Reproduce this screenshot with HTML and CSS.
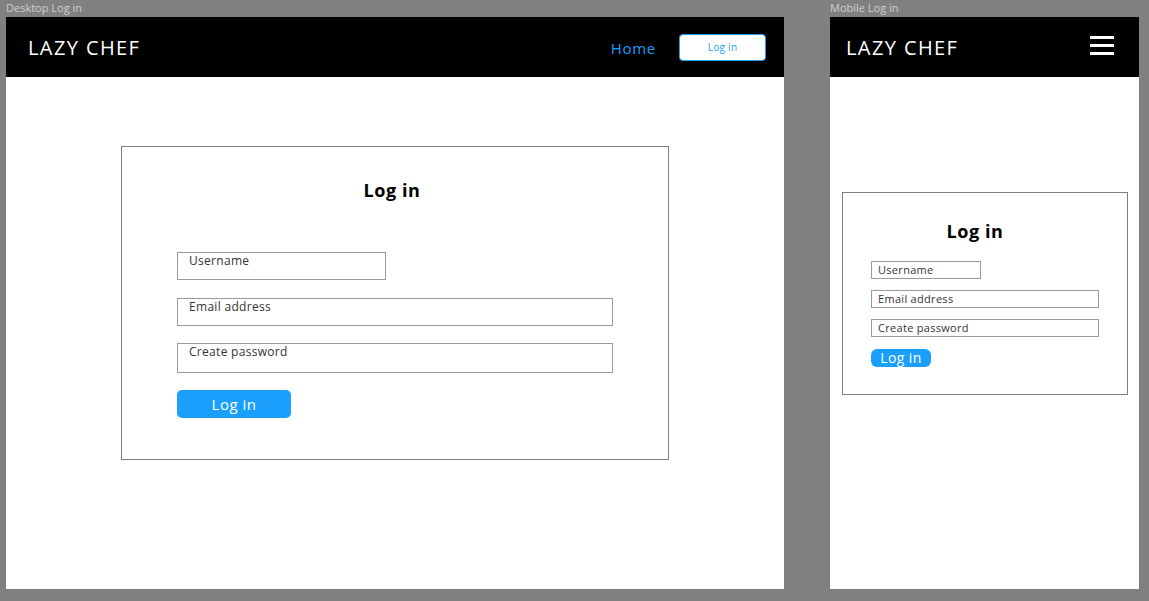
FILE: index.html
```html
<!DOCTYPE html>
<html lang="en">
<head>
<meta charset="utf-8">
<title>Lazy Chef Log in</title>
<link rel="stylesheet" href="styles.css">
</head>
<body>
<div class="canvas">
  <section class="col col-desktop">
    <div class="frame-label">Desktop Log in</div>
    <div class="frame frame-desktop">
      <header class="nav">
        <div class="logo">LAZY CHEF</div>
        <nav class="nav-right">
          <a class="nav-home">Home</a>
          <a class="nav-btn">Log in</a>
        </nav>
      </header>
      <div class="d-body">
        <div class="card d-card">
          <h1 class="d-title">Log in</h1>
          <div class="d-form">
            <div class="field d-field d-user">Username</div>
            <div class="field d-field d-wide d-email">Email address</div>
            <div class="field d-field d-wide d-pass">Create password</div>
            <div class="d-submit">Log in</div>
          </div>
        </div>
      </div>
    </div>
  </section>
  <section class="col col-mobile">
    <div class="frame-label">Mobile Log in</div>
    <div class="frame frame-mobile">
      <header class="nav m-nav">
        <div class="logo">LAZY CHEF</div>
        <div class="burger"><span></span><span></span><span></span></div>
      </header>
      <div class="m-body">
        <div class="card m-card">
          <h1 class="m-title">Log in</h1>
          <div class="m-form">
            <div class="field m-field m-user">Username</div>
            <div class="field m-field m-wide">Email address</div>
            <div class="field m-field m-wide">Create password</div>
            <div class="m-submit">Log in</div>
          </div>
        </div>
      </div>
    </div>
  </section>
</div>
</body>
</html>
```

FILE: styles.css
```css
html, body {
  margin: 0;
  padding: 0;
  background: #808080;
  font-family: "Open Sans", "DejaVu Sans", sans-serif;
}
.canvas {
  display: flex;
  gap: 46px;
  padding-left: 6px;
  height: 601px;
  overflow: hidden;
}
.col { display: flex; flex-direction: column; }
.frame-label {
  height: 17px;
  font-size: 11px;
  line-height: 17px;
  color: #cfcfcf;
  margin-top: -1px;
  margin-bottom: 1px;
}
.frame {
  background: #fff;
  height: 572px;
  display: flex;
  flex-direction: column;
}
.frame-desktop { width: 778px; }
.frame-mobile { width: 309px; }

.nav {
  height: 60px;
  background: #000;
  display: flex;
  align-items: center;
  justify-content: space-between;
  padding: 0 18px 0 22px;
  flex-shrink: 0;
}
.m-nav { padding: 0 25px 0 16px; }
.logo {
  color: #fff;
  font-size: 20px;
  letter-spacing: 1.4px;
  margin-top: 1px;
}
.nav-right { display: flex; align-items: center; gap: 23px; }
.nav-home {
  color: #1a9ffd;
  font-size: 15px;
  letter-spacing: 0.7px;
  margin-top: 1px;
}
.nav-btn {
  width: 85px;
  height: 25px;
  background: #fff;
  border: 1px solid #1a9ffd;
  border-radius: 4px;
  color: #1a9ffd;
  font-size: 10px;
  letter-spacing: 0.3px;
  display: flex;
  align-items: center;
  justify-content: center;
}
.burger { display: flex; flex-direction: column; gap: 5px; margin-top: -4px; }
.burger span { display: block; width: 24px; height: 3px; background: #fff; }

.card {
  background: #fff;
  border: 1px solid #808080;
  box-sizing: border-box;
}
.d-body { padding: 69px 0 0 115px; }
.d-card { width: 548px; height: 314px; }
.d-title {
  margin: 31px 0 0;
  text-align: center;
  font-size: 18px;
  font-weight: 700;
  line-height: 24px;
  letter-spacing: 0.6px;
  padding-right: 6px;
}
.d-form {
  padding: 0 0 0 55px;
  margin-top: 50px;
  display: flex;
  flex-direction: column;
  align-items: flex-start;
}
.field {
  box-sizing: border-box;
  border: 1px solid #9a9a9a;
  color: #333;
  background: #fff;
}
.d-field {
  height: 28px;
  font-size: 12px;
  line-height: 14px;
  letter-spacing: 0.3px;
  padding: 1px 0 0 11px;
  margin-bottom: 18px;
}
.d-user { width: 209px; }
.d-wide { width: 436px; }
.d-email { margin-bottom: 17px; }
.d-pass { height: 30px; margin-bottom: 17px; }
.d-submit {
  width: 114px;
  height: 28px;
  background: #1a9ffd;
  border-radius: 5px;
  color: #fff;
  font-size: 15px;
  letter-spacing: 0.5px;
  display: flex;
  align-items: center;
  justify-content: center;
}

.m-body { padding: 115px 0 0 12px; }
.m-card { width: 286px; height: 203px; }
.m-title {
  margin: 26px 0 0;
  text-align: center;
  font-size: 18px;
  font-weight: 700;
  line-height: 24px;
  letter-spacing: 0.6px;
  padding-right: 20px;
}
.m-form {
  padding-left: 28px;
  margin-top: 18px;
  display: flex;
  flex-direction: column;
  align-items: flex-start;
}
.m-field {
  height: 18px;
  font-size: 11px;
  line-height: 16px;
  letter-spacing: 0.3px;
  padding: 0 0 0 6px;
  margin-bottom: 11px;
}
.m-user { width: 110px; }
.m-wide { width: 228px; }
.m-submit {
  width: 60px;
  height: 18px;
  background: #1a9ffd;
  border-radius: 6px;
  color: #fff;
  font-size: 14px;
  line-height: 18px;
  letter-spacing: 0.4px;
  text-align: center;
  margin-top: 1px;
}
```
